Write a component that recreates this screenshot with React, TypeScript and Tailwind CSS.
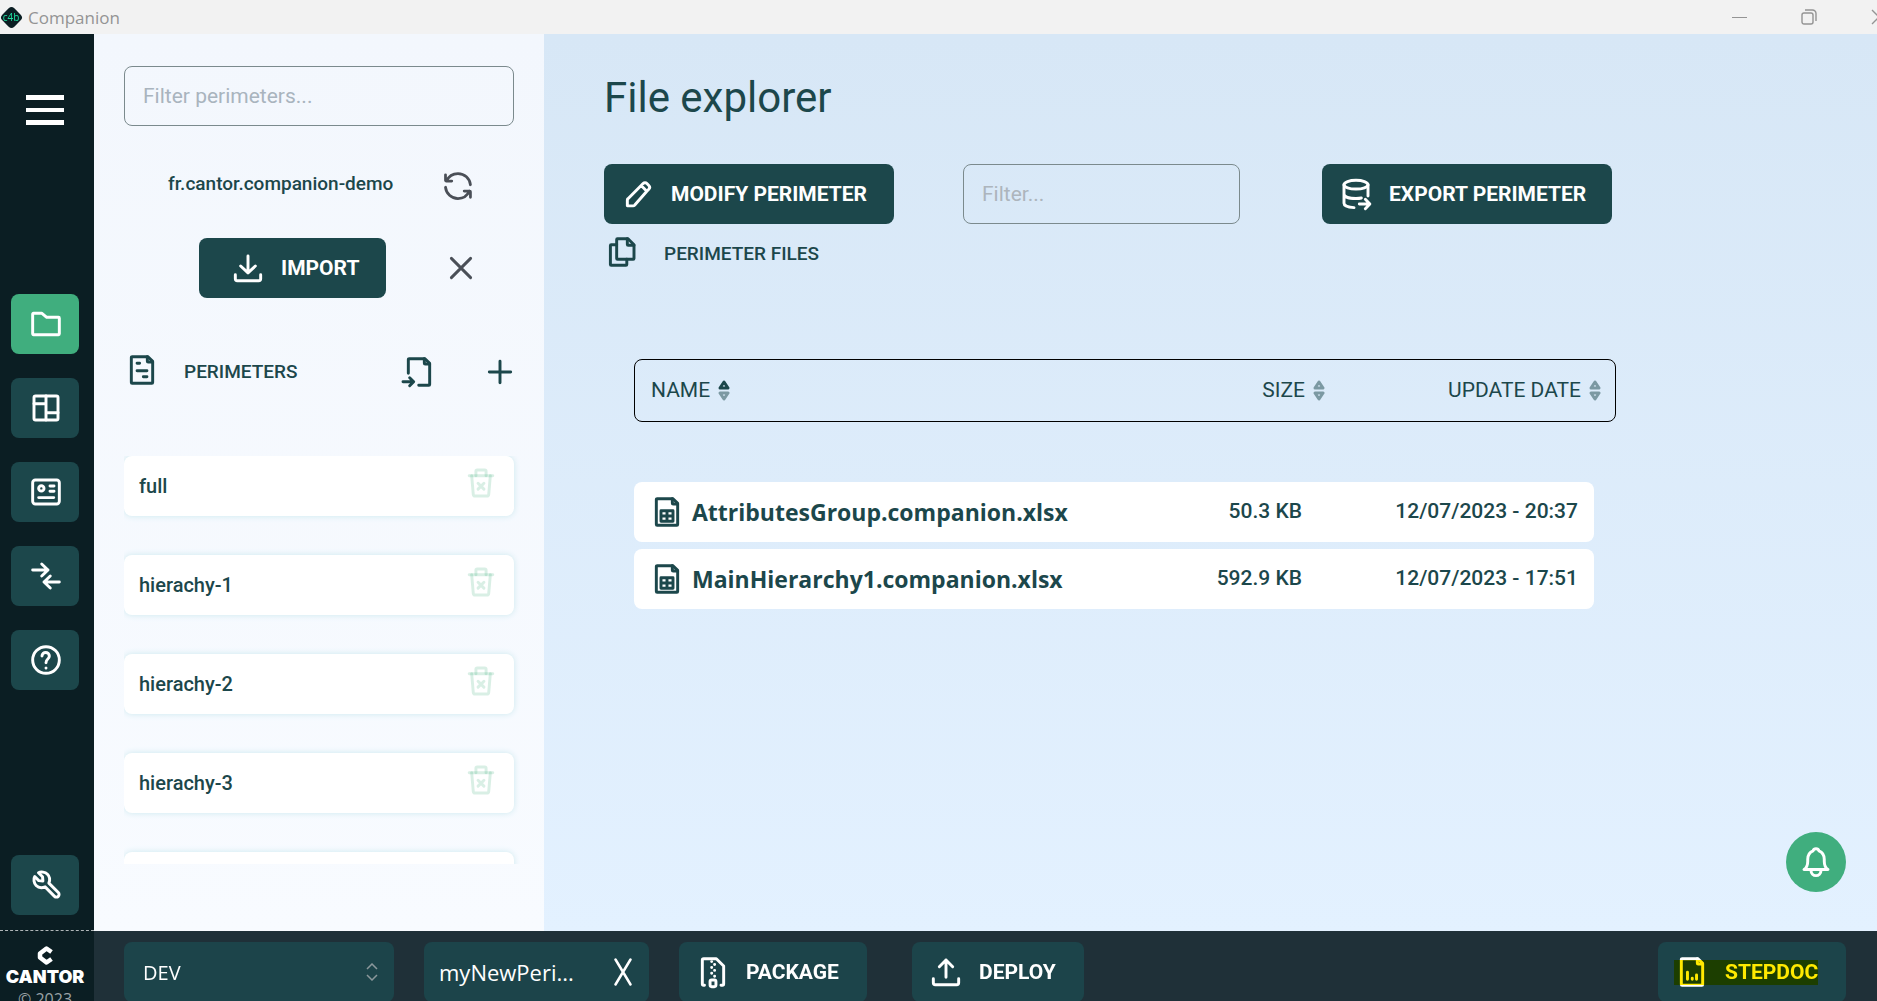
import { useState } from "react";
import type { ReactNode } from "react";

type IconProps = { children: ReactNode; className?: string };

function Icon({ children, className = "size-8" }: IconProps) {
  return (
    <svg
      viewBox="0 0 24 24"
      fill="none"
      stroke="currentColor"
      strokeWidth={2.2}
      strokeLinecap="round"
      strokeLinejoin="round"
      overflow="visible"
      aria-hidden="true"
      className={`shrink-0 ${className}`}
    >
      {children}
    </svg>
  );
}

const PageOutline = () => (
  <>
    <path d="M4 21.4V2.6a.6.6 0 01.6-.6h11.65a.6.6 0 01.43.18l3.14 3.14a.6.6 0 01.18.43V21.4a.6.6 0 01-.6.6H4.6a.6.6 0 01-.6-.6z" />
    <path d="M16 2v3.4a.6.6 0 00.6.6H20" />
  </>
);

const FolderIcon = () => (
  <Icon>
    <path d="M2 11V4.6a.6.6 0 01.6-.6h6.18a.6.6 0 01.39.14l3.16 2.72a.6.6 0 00.39.14h8.68a.6.6 0 01.6.6v11.8a.6.6 0 01-.6.6H2.6a.6.6 0 01-.6-.6z" />
  </Icon>
);

const LayoutIcon = () => (
  <Icon>
    <rect x="3" y="3" width="18" height="18" rx="1.2" />
    <path d="M12 3v18M3 8.8h9M12 15.6h9" />
  </Icon>
);

const CardIcon = () => (
  <Icon>
    <rect x="2" y="3" width="20" height="18" rx="2" />
    <circle cx="8.5" cy="9.3" r="2" />
    <path d="M15 7.5h3M15 11.5h3M6.5 16.2h11.3" />
  </Icon>
);

const ArrowsIcon = () => (
  <Icon>
    <path d="M2 7.5h11.5M8.8 3l4.7 4.5L8.8 12M22 16.5H10.5M15.2 12l-4.7 4.5 4.7 4.5" />
  </Icon>
);

const HelpIcon = () => (
  <Icon>
    <circle cx="12" cy="12" r="10" />
    <path d="M9 9c0-3.5 5.5-3.5 5.5 0 0 2.5-2.5 2-2.5 5M12 18.01l.01-.01" />
  </Icon>
);

const WrenchIcon = () => (
  <Icon>
    <path
      transform="matrix(-1 0 0 1 24.2 0)"
      d="M10.05 10.6l-7.07 7.08a2 2 0 002.83 2.83l7.07-7.08M10.05 10.6c-.84-2.15-.68-4.97 1.06-6.71 1.74-1.74 4.95-2.12 6.72-1.06l-3.04 3.04-.28 3.11 3.11-.28 3.04-3.04c1.06 1.77.68 4.98-1.06 6.72-1.74 1.74-4.57 1.9-6.72 1.06"
    />
  </Icon>
);

const RefreshIcon = () => (
  <Icon className="size-[30px]">
    <path d="M2.83 8A10 10 0 0112 2c5.19 0 9.45 3.95 9.95 9M7 8H2.6a.6.6 0 01-.6-.6V3M21.12 16c-1.55 3.53-5.07 6-9.17 6-5.19 0-9.45-3.95-9.95-9M16.95 16h4.4a.6.6 0 01.6.6V21" />
  </Icon>
);

const DownloadIcon = () => (
  <Icon>
    <path d="M12 3v12.5M6.5 10.5l5.5 5.2 5.5-5.2M2.5 17v3A1.5 1.5 0 004 21.5h16a1.5 1.5 0 001.5-1.5v-3" />
  </Icon>
);

const UploadIcon = () => (
  <Icon>
    <path d="M12 16V3M7 8l5-5 5 5M2.5 17v3A1.5 1.5 0 004 21.5h16a1.5 1.5 0 001.5-1.5v-3" />
  </Icon>
);

const CrossIcon = () => (
  <Icon>
    <path d="M4.8 4.8l14.4 14.4M19.2 4.8L4.8 19.2" />
  </Icon>
);

const PlusIcon = () => (
  <Icon>
    <path d="M4 12h16M12 4v16" />
  </Icon>
);

const PageIcon = () => (
  <Icon>
    <PageOutline />
    <path d="M8.3 7h1.9M8.3 12.5h7.4M13 17h2.7" />
  </Icon>
);

const PageImportIcon = () => (
  <Icon>
    <path d="M4 13V2.6a.6.6 0 01.6-.6h11.65a.6.6 0 01.43.18l3.14 3.14a.6.6 0 01.18.43V21.4a.6.6 0 01-.6.6h-7.6" />
    <path d="M16 2v3.4a.6.6 0 00.6.6H20M0 19.3h7.6M5 16.3l3 3-3 3" />
  </Icon>
);

const TrashIcon = () => (
  <Icon className="size-8 text-[#40ae7e]">
    <g strokeOpacity="0.2">
      <path d="M5 6.5l1.2 14a1.4 1.4 0 001.4 1.3h8.8a1.4 1.4 0 001.4-1.3l1.2-14" />
      <path d="M3.2 6.5h17.6" />
      <path d="M8.2 6.5V3.2a1 1 0 011-1h5.6a1 1 0 011 1v3.3" />
      <path d="M9.8 12.2l4.4 4.4M14.2 12.2l-4.4 4.4" />
    </g>
  </Icon>
);

const PencilIcon = () => (
  <Icon>
    <path d="M14.36 5.65l1.48-1.48a2 2 0 012.83 0l1.42 1.42a2 2 0 010 2.82l-1.48 1.48m-4.25-4.24l-9.85 9.85a1.6 1.6 0 00-.5 1.1v4.3h4.3a1.6 1.6 0 001.1-.5l9.2-10.5m-4.25-4.25l4.25 4.24" />
  </Icon>
);

const DatabaseExportIcon = () => (
  <Icon>
    <ellipse cx="12" cy="5" rx="9" ry="3.3" />
    <path d="M3 5v14c0 1.8 3.4 3 7.5 3.2M3 12c0 2.1 4 3.4 9 3.4 1.4 0 2.9-.1 4-.4M21 5v8.5M14.5 19.5h7.8M19 16l3.4 3.5L19 23" />
  </Icon>
);

const PagesIcon = () => (
  <Icon>
    <path d="M8 16.9V2.6a.6.6 0 01.6-.6h7.65a.6.6 0 01.43.18l4.14 4.14a.6.6 0 01.18.43v10.15a.6.6 0 01-.6.6H8.6a.6.6 0 01-.6-.6z" />
    <path d="M16 2v4.4a.6.6 0 00.6.6H21M8 6.5H3.9a.6.6 0 00-.6.6v14.3a.6.6 0 00.6.6H15a.6.6 0 00.6-.6v-3.9" />
  </Icon>
);

const SheetIcon = () => (
  <Icon>
    <PageOutline />
    <path d="M7.5 11h9v8h-9zM12 11v8M7.5 15h9" />
  </Icon>
);

const ZipIcon = () => (
  <Icon>
    <path d="M5.6 22H5a1 1 0 01-1-1V3a1 1 0 011-1h9.5L20 7.5V21a1 1 0 01-1 1h-1" />
    <path d="M11 4.2h.01M13.2 6.4h.01M11 8.6h.01M13.2 10.8h.01M11 13h.01M13.2 15.2h.01" />
    <rect x="9.8" y="18" width="4.4" height="5" rx="1.2" />
  </Icon>
);

const ReportIcon = () => (
  <Icon>
    <PageOutline />
    <path d="M8.6 12.2v5.2M12.2 16.6v.8M15.4 14.2v3.2" />
  </Icon>
);

const BellIcon = () => (
  <Icon>
    <path d="M3 17.6h18c-2-1.2-2.8-3.2-2.8-6.2V10c0-3-1.4-5.4-4-6.4C13.9 2.5 13.1 2 12 2s-1.9.5-2.2 1.6C7.2 4.6 5.8 7 5.8 10v1.4c0 3-.8 5-2.8 6.2z" />
    <path d="M8.3 18.5a3.7 3.7 0 007.4 0" />
  </Icon>
);

const SortIcon = ({ up }: { up?: boolean }) => (
  <svg viewBox="0 0 12 21" className="h-[21px] w-3" aria-hidden="true" fill="none" stroke="#1c474b" strokeWidth={3} strokeLinejoin="round">
    <path d="M6 2L10 8H2z" strokeOpacity={up ? 1 : 0.5} />
    <path d="M6 19L10 13H2z" strokeOpacity={0.5} />
  </svg>
);

const navItems = [
  { label: "Files", icon: FolderIcon },
  { label: "Layout", icon: LayoutIcon },
  { label: "Cards", icon: CardIcon },
  { label: "Compare", icon: ArrowsIcon },
  { label: "Help", icon: HelpIcon },
];

const perimeters = ["full", "hierachy-1", "hierachy-2", "hierachy-3", "hierachy-4"];

const files = [
  { name: "AttributesGroup.companion.xlsx", size: "50.3 KB", date: "12/07/2023 - 20:37" },
  { name: "MainHierarchy1.companion.xlsx", size: "592.9 KB", date: "12/07/2023 - 17:51" },
];

function TitleBar() {
  return (
    <header className="flex h-[34px] shrink-0 items-center bg-[#f2f2f2] font-['Open_Sans',sans-serif] text-[#949494]">
      <div className="relative flex size-[22px] items-center justify-center">
        <span className="absolute size-[17px] rotate-45 rounded bg-[#0b1e23]" />
        <span className="relative text-[10px] leading-none text-[#1fe0a0]">c4b</span>
      </div>
      <span className="ml-[6px] pt-[2px] text-[17px] leading-6">Companion</span>
      <div className="ml-auto -mr-[10px] flex items-center gap-[54px]">
        <button aria-label="Minimize" className="h-4 w-4">
          <svg viewBox="0 0 16 16" className="size-4" stroke="currentColor"><path d="M1 8.5h15" /></svg>
        </button>
        <button aria-label="Restore" className="h-4 w-4">
          <svg viewBox="0 0 16 16" className="size-4" fill="none" stroke="currentColor" strokeWidth={1.4}>
            <rect x="1" y="4" width="11" height="11" rx="2" />
            <path d="M4 1h7.5A3.500 3.500 0 0115 4.500V12" />
          </svg>
        </button>
        <button aria-label="Close" className="h-4 w-4">
          <svg viewBox="0 0 16 16" className="size-4" stroke="currentColor" strokeWidth={1.4}><path d="M1 1l14 14M15 1L1 15" /></svg>
        </button>
      </div>
    </header>
  );
}

function Sidebar() {
  const [active, setActive] = useState(0);

  return (
    <aside className="flex w-[94px] shrink-0 flex-col items-center bg-[#0b1e23] text-white">
      <button aria-label="Menu" className="mr-1 mt-[61px] flex w-[38px] flex-col gap-2">
        <span className="h-[5px] w-full bg-white" />
        <span className="h-1 w-full bg-white" />
        <span className="h-[5px] w-full bg-white" />
      </button>

      <nav className="mr-1 mt-[169px] flex flex-col gap-6">
        {navItems.map((item, index) => (
          <button
            key={item.label}
            aria-label={item.label}
            onClick={() => setActive(index)}
            className={`flex h-[60px] w-[68px] items-center justify-center rounded-lg pl-[2px] ${
              index === active ? "bg-[#40ae7e]" : "bg-[#1c474b]"
            }`}
          >
            <item.icon />
          </button>
        ))}
      </nav>

      <button
        aria-label="Settings"
        className="mb-[15px] mr-1 mt-auto flex h-[60px] w-[68px] items-center justify-center rounded-lg bg-[#1c474b] pl-[2px]"
      >
        <WrenchIcon />
      </button>

      {/* Logo */}
      <div className="flex h-[71px] w-full shrink-0 flex-col items-center overflow-hidden border-t border-dashed border-[#b0b6b8] pr-1 pt-[15px]">
        <svg viewBox="0 0 17 19" className="h-[19px] w-[17px] shrink-0" fill="none" stroke="white" strokeWidth={4.5} strokeLinejoin="round" aria-hidden="true">
          <path d="M14.5 6L9.500 2.500 3 7.500v4L9.500 16.500l5-3.500" />
        </svg>
        <span className="mt-[2px] font-[Inter,sans-serif] text-[18px] font-black leading-5">CANTOR</span>
        <span className="font-['Open_Sans',sans-serif] text-base leading-6 text-[#9aa3a6]">© 2023</span>
      </div>
    </aside>
  );
}

function PerimeterPanel() {
  return (
    <section className="flex w-[450px] shrink-0 flex-col bg-linear-to-b from-[#f3f7fd] to-[#f8fbff] pb-[67px] pl-[30px] pt-8 text-[#1c474b]">
      <input
        aria-label="Filter perimeters"
        placeholder="Filter perimeters..."
        className="h-[60px] w-[390px] shrink-0 rounded-lg border border-[#7b8a8d] bg-transparent px-[18px] text-[21px] outline-none placeholder:text-[#a9b4be]"
      />

      <div className="mt-[45px] flex h-[30px] w-[390px] shrink-0 items-center justify-between pl-11 pr-[41px]">
        <span className="pb-1 text-[19px] font-medium leading-7">fr.cantor.companion-demo</span>
        <button aria-label="Refresh" className="text-[#4a4f57]">
          <RefreshIcon />
        </button>
      </div>

      <div className="mt-[37px] flex w-[390px] shrink-0 items-center justify-between pl-[75px] pr-[37px]">
        <button className="flex h-[60px] w-[187px] items-center rounded-lg bg-[#1c474b] pl-[33px] text-[21px] font-bold text-white">
          <DownloadIcon />
          <span className="ml-[17px] pt-[2px]">IMPORT</span>
        </button>
        <button aria-label="Cancel" className="text-[#4a4f57]">
          <CrossIcon />
        </button>
      </div>

      <div className="mt-14 flex w-[390px] shrink-0 items-center pl-[2px]">
        <span className="pb-1"><PageIcon /></span>
        <h2 className="ml-[26px] text-[19px] leading-8 font-medium">PERIMETERS</h2>
        <button aria-label="Import perimeter" className="ml-auto">
          <PageImportIcon />
        </button>
        <button aria-label="Add perimeter" className="-mr-[2px] ml-[49px]">
          <PlusIcon />
        </button>
      </div>

      {/* Scrollable list */}
      <ul className="mt-[66px] flex min-h-0 w-[396px] flex-1 flex-col gap-[39px] overflow-hidden">
        {perimeters.map((name) => (
          <li
            key={name}
            className="flex h-[60px] w-[390px] shrink-0 items-center justify-between rounded-lg bg-white pl-[15px] pr-[17px] shadow-[0_0_6px_#cbe8ee]"
          >
            <span className="text-xl font-medium">{name}</span>
            <button aria-label={`Delete ${name}`} className="mb-[6px]">
              <TrashIcon />
            </button>
          </li>
        ))}
      </ul>
    </section>
  );
}

function FileExplorer() {
  return (
    <main className="relative min-w-0 flex-1 bg-linear-to-b from-[#d7e7f6] to-[#e3f1ff] pl-[60px] pr-[196px] pt-10 text-[#1c474b]">
      <h1 className="pt-[2px] text-[42px] leading-[44px]">File explorer</h1>

      <div className="mt-11 grid grid-cols-3">
        <button className="flex h-[60px] w-[290px] items-center rounded-lg bg-[#1c474b] pl-[18px] text-[21px] font-bold text-white">
          <PencilIcon />
          <span className="ml-[17px] pt-[2px]">MODIFY PERIMETER</span>
        </button>
        <input
          aria-label="Filter files"
          placeholder="Filter..."
          className="h-[60px] w-[277px] rounded-lg border border-[#7b8a8d] bg-transparent px-[18px] text-[21px] outline-none placeholder:text-[#adb5bd]"
        />
        <button className="flex h-[60px] w-[290px] items-center rounded-lg bg-[#1c474b] pl-[18px] text-[21px] font-bold text-white">
          <DatabaseExportIcon />
          <span className="ml-[17px] pt-[2px]">EXPORT PERIMETER</span>
        </button>
      </div>

      <div className="mt-3 flex items-center pl-[2px]">
        <span className="pb-1"><PagesIcon /></span>
        <h2 className="ml-[26px] text-[19px] leading-8 font-medium">PERIMETER FILES</h2>
      </div>

      <table className="ml-[30px] mr-[65px] mt-[87px] block">
        <thead className="block">
          <tr className="grid h-[63px] grid-cols-[1fr_160px_276px] items-center rounded-lg border border-black pl-4 pr-[14px] text-[21px]">
            <th className="flex items-center gap-2 font-normal">NAME <SortIcon up /></th>
            <th className="flex items-center justify-end gap-2 font-normal">SIZE <SortIcon /></th>
            <th className="flex items-center justify-end gap-2 font-normal">UPDATE DATE <SortIcon /></th>
          </tr>
        </thead>
        <tbody className="mr-[22px] mt-[60px] flex flex-col gap-[7px]">
          {files.map((file) => (
            <tr key={file.name} className="grid h-[60px] grid-cols-[1fr_160px_276px] items-center rounded-lg bg-white pl-[17px] pr-4 text-[21px] font-medium">
              <td className="flex items-center gap-[9px] font-['Open_Sans',sans-serif] text-[23px] font-bold">
                <SheetIcon />
                {file.name}
              </td>
              <td className="text-right">{file.size}</td>
              <td className="text-right">{file.date}</td>
            </tr>
          ))}
        </tbody>
      </table>

      <button
        aria-label="Notifications"
        className="absolute bottom-[39px] right-[31px] flex size-[60px] items-center justify-center rounded-full bg-[#40ae7e] text-white"
      >
        <BellIcon />
      </button>
    </main>
  );
}

function ActionBar() {
  return (
    <footer className="flex h-[70px] shrink-0 items-start overflow-hidden bg-[#1f3038] pl-[30px] pr-[31px] pt-[11px] text-white">
      <div className="relative w-[270px]">
        <select
          aria-label="Environment"
          className="h-[60px] w-full appearance-none rounded-lg bg-[#1c444a] px-[19px] pt-[2px] font-['Open_Sans',sans-serif] text-xl outline-none"
        >
          <option>DEV</option>
          <option>PROD</option>
        </select>
        <svg viewBox="0 0 12 18" className="pointer-events-none absolute right-4 top-[21px] h-[18px] w-3" fill="none" stroke="#8b989c" strokeWidth={1.5} aria-hidden="true">
          <path d="M1 6l5-5 5 5M1 12l5 5 5-5" />
        </svg>
      </div>

      <div className="ml-[30px] flex h-[60px] w-[225px] items-center justify-between rounded-lg bg-[#1c444a] pl-[15px] pr-[17px]">
        <span className="font-['Open_Sans',sans-serif] text-[22px]">myNewPeri...</span>
        <button aria-label="Clear perimeter">
          <svg viewBox="0 0 18 28" className="h-7 w-[18px]" fill="none" stroke="white" strokeWidth={2.5} strokeLinecap="round" aria-hidden="true">
            <path d="M1.5 1.5l15 25M16.5 1.5l-15 25" />
          </svg>
        </button>
      </div>

      <button className="ml-[30px] flex h-[60px] w-[188px] items-center rounded-lg bg-[#1c444a] pl-[18px] text-[21px] font-bold">
        <ZipIcon />
        <span className="ml-[17px] pt-[2px]">PACKAGE</span>
      </button>

      <button className="ml-[45px] flex h-[60px] w-[172px] items-center rounded-lg bg-[#1c444a] pl-[18px] text-[21px] font-bold">
        <UploadIcon />
        <span className="ml-[17px] pt-[2px]">DEPLOY</span>
      </button>

      <button className="relative ml-auto flex h-[60px] w-[188px] items-center rounded-lg bg-[#1c444a] pl-[18px] text-[21px] font-bold">
        <ReportIcon />
        <span className="ml-[17px] pt-[2px]">STEPDOC</span>
        {/* Search highlight */}
        <span className="absolute left-4 top-[18px] h-[25px] w-36 bg-[#ffe900] mix-blend-multiply" />
      </button>
    </footer>
  );
}

export default function App() {
  return (
    <div className="flex h-screen flex-col overflow-hidden font-[Roboto,sans-serif]">
      <TitleBar />
      <div className="flex min-h-0 flex-1">
        <Sidebar />
        <div className="flex min-w-0 flex-1 flex-col">
          <div className="flex min-h-0 flex-1">
            <PerimeterPanel />
            <FileExplorer />
          </div>
          <ActionBar />
        </div>
      </div>
    </div>
  );
}
